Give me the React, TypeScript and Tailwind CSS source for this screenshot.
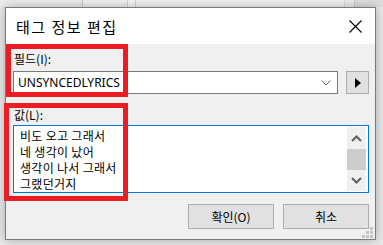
import React from "react";

const KR = '"Noto Sans CJK KR", "Noto Sans", sans-serif';

function Chevron({ up, className }: { up?: boolean; className?: string }) {
  return (
    <svg width="11" height="7" viewBox="0 0 11 7" className={className}>
      <polyline
        points={up ? "1,6 5.5,1.5 10,6" : "1,1 5.5,5.5 10,1"}
        fill="none"
        stroke="#606060"
        strokeWidth="2"
      />
    </svg>
  );
}

function SizeGrip() {
  const dots = [
    [8, 0],
    [4, 4],
    [8, 4],
    [0, 8],
    [4, 8],
    [8, 8],
  ];
  return (
    <svg width="11" height="11" viewBox="0 0 11 11">
      {dots.map(([x, y], i) => (
        <rect key={i} x={x} y={y} width="3" height="3" fill="#c4c4c4" />
      ))}
    </svg>
  );
}

const lyrics = ["비도 오고 그래서", "네 생각이 났어", "생각이 나서 그래서", "그랬던거지"];

export default function App() {
  return (
    <div
      className="relative w-[383px] h-[245px] overflow-hidden bg-[#e9e9e9] flex flex-col"
      style={{ fontFamily: KR }}
    >
      {/* window behind the dialog */}
      <div className="h-[7px] flex shrink-0">
        <div className="w-[83px] bg-[#ededed] border-r border-[#c9c9c9]" />
        <div className="w-[45px] bg-[#f1f1f1] border-r border-[#d2d2d2]" />
        <div className="w-[8px] bg-[#f6f6f6] border-r border-[#d2d2d2]" />
        <div className="w-[209px] bg-[#f3f3f3] border-r border-[#d8d8d8]" />
        <div className="w-[10px] bg-[#eeeeee] border-r border-[#cfcfcf]" />
        <div className="flex-1 bg-[#dedede]" />
      </div>

      <div className="pl-[5px] flex">
        <div className="w-[371px] h-[233px] border border-[#7a7a7a] bg-[#f0f0f0] flex flex-col shadow-[0_0_10px_rgba(0,0,0,0.28)]">
          {/* title bar */}
          <div className="h-[36px] bg-white flex items-center justify-between pl-[10px] pr-[13px] shrink-0">
            <span className="text-[15px] tracking-[1.5px] text-black leading-none">태그 정보 편집</span>
            <svg width="13" height="13" viewBox="0 0 13 13">
              <path d="M0.5 0.5 L12.5 12.5 M12.5 0.5 L0.5 12.5" stroke="#000" strokeWidth="1.1" />
            </svg>
          </div>

          {/* body */}
          <div className="flex-1 flex flex-col pl-[7px] pr-[6px] pt-[7px] text-[12px] text-black">
            <label className="h-[16px] leading-[16px] pl-[1px]">필드(I):</label>
            <div className="mt-[4px] flex gap-[8px]">
              <div className="w-[325px] h-[23px] bg-white border border-[#7a7a7a] flex items-center justify-between pl-[4px] pr-[6px]">
                <span className="text-[12px] font-['Noto_Sans',sans-serif]">UNSYNCEDLYRICS</span>
                <svg width="10" height="6" viewBox="0 0 10 6">
                  <polyline points="0.5,0.5 5,5 9.5,0.5" fill="none" stroke="#6a6a6a" strokeWidth="1" />
                </svg>
              </div>
              <button className="w-[23px] h-[23px] bg-[#e1e1e1] border border-[#adadad] flex items-center justify-center">
                <svg width="6" height="10" viewBox="0 0 6 10">
                  <polygon points="0,0 6,5 0,10" fill="#000" />
                </svg>
              </button>
            </div>

            <label className="mt-[13px] h-[16px] leading-[16px] pl-[1px]">값(L):</label>
            <div className="mt-[2px] w-[356px] h-[68px] bg-white border border-[#0078d7] flex">
              <div className="flex-1 pl-[6px] pt-[2px] leading-[16px] text-[12px] tracking-[0.3px]">
                {lyrics.map((l) => (
                  <div key={l}>{l}</div>
                ))}
              </div>
              <div className="w-[19px] mr-[2px] my-[1px] bg-[#f0f0f0] flex flex-col items-center">
                <div className="h-[22px] flex items-center justify-center">
                  <Chevron up />
                </div>
                <div className="w-full h-[21px] bg-[#cdcdcd]" />
                <div className="flex-1 flex items-center justify-center">
                  <Chevron />
                </div>
              </div>
            </div>

            <div className="mt-[11px] flex justify-end gap-[9px]">
              <button className="w-[86px] h-[25px] bg-[#e1e1e1] border border-[#adadad] text-[12px] flex items-center justify-center">
                확인(O)
              </button>
              <button className="w-[86px] h-[25px] bg-[#e1e1e1] border border-[#adadad] text-[12px] flex items-center justify-center">
                취소
              </button>
            </div>
            <div className="flex justify-end mr-[-4px] mt-[-2px]">
              <SizeGrip />
            </div>
          </div>
        </div>
      </div>

      {/* red annotation boxes */}
      <div className="absolute left-[6px] top-[44px] w-[122px] h-[53px] border-[5px] border-[#ec1c24]" />
      <div className="absolute left-[4px] top-[103px] w-[124px] h-[98px] border-[5px] border-[#ec1c24]" />
    </div>
  );
}
